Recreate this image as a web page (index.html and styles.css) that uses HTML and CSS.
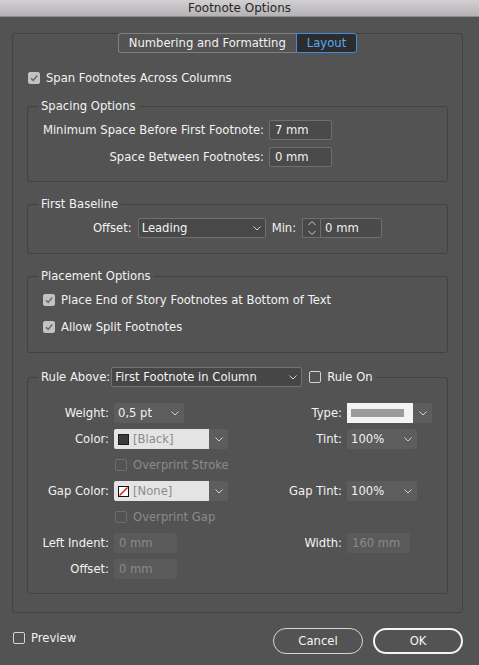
FILE: index.html
```html
<!DOCTYPE html>
<html lang="en">
<head>
<meta charset="utf-8">
<title>Footnote Options</title>
<link rel="stylesheet" href="styles.css">
</head>
<body>
<div class="titlebar">Footnote Options</div>

<div class="dialog">
  <div class="panel">
    <div class="tabs">
      <span class="tab">Numbering and Formatting</span>
      <span class="tab active">Layout</span>
    </div>

    <label class="check span-check">
      <span class="box on"><svg width="10" height="10" viewBox="0 0 10 10"><polyline points="2,5.2 4.2,7.4 8.2,2.6" fill="none" stroke="#6b6b6b" stroke-width="1.6"/></svg></span>
      <span>Span Footnotes Across Columns</span>
    </label>

    <fieldset class="group spacing">
      <legend>Spacing Options</legend>
      <div class="spacing-grid">
        <span class="lbl">Minimum Space Before First Footnote:</span>
        <span class="input">7 mm</span>
        <span class="lbl">Space Between Footnotes:</span>
        <span class="input">0 mm</span>
      </div>
    </fieldset>

    <fieldset class="group baseline">
      <legend>First Baseline</legend>
      <div class="baseline-row">
        <span>Offset:</span>
        <span class="select w128">
          <span>Leading</span>
          <svg class="chev" width="8" height="5" viewBox="0 0 8 5"><polyline points="0.5,0.5 4,4 7.5,0.5" fill="none" stroke="#d2d2d2"/></svg>
        </span>
        <span>Min:</span>
        <span class="spin">
          <span class="stepper">
            <svg width="8" height="16" viewBox="0 0 8 16"><polyline points="0.5,5 4,1.5 7.5,5" fill="none" stroke="#d2d2d2"/><polyline points="0.5,11 4,14.5 7.5,11" fill="none" stroke="#d2d2d2"/></svg>
          </span>
          <span class="input joined">0 mm</span>
        </span>
      </div>
    </fieldset>

    <fieldset class="group placement">
      <legend>Placement Options</legend>
      <div class="checks">
        <label class="check">
          <span class="box on"><svg width="10" height="10" viewBox="0 0 10 10"><polyline points="2,5.2 4.2,7.4 8.2,2.6" fill="none" stroke="#6b6b6b" stroke-width="1.6"/></svg></span>
          <span>Place End of Story Footnotes at Bottom of Text</span>
        </label>
        <label class="check">
          <span class="box on"><svg width="10" height="10" viewBox="0 0 10 10"><polyline points="2,5.2 4.2,7.4 8.2,2.6" fill="none" stroke="#6b6b6b" stroke-width="1.6"/></svg></span>
          <span>Allow Split Footnotes</span>
        </label>
      </div>
    </fieldset>

    <fieldset class="group rule">
      <legend>
        <span class="legend-row">
          <span>Rule Above:</span>
          <span class="select w191">
            <span>First Footnote in Column</span>
            <svg class="chev" width="8" height="5" viewBox="0 0 8 5"><polyline points="0.5,0.5 4,4 7.5,0.5" fill="none" stroke="#d2d2d2"/></svg>
          </span>
          <label class="check rule-on">
            <span class="box"></span>
            <span>Rule On</span>
          </label>
        </span>
      </legend>

      <div class="rule-grid">
        <span class="lbl">Weight:</span>
        <span class="drop">
          <span>0,5 pt</span>
          <svg width="8" height="5" viewBox="0 0 8 5"><polyline points="0.5,0.5 4,4 7.5,0.5" fill="none" stroke="#d2d2d2"/></svg>
        </span>
        <span class="lbl">Type:</span>
        <span class="combo">
          <span class="typebox"><span class="typebar"></span></span>
          <span class="arrow"><svg width="8" height="5" viewBox="0 0 8 5"><polyline points="0.5,0.5 4,4 7.5,0.5" fill="none" stroke="#d2d2d2"/></svg></span>
        </span>

        <span class="lbl">Color:</span>
        <span class="combo">
          <span class="swatchbox"><span class="swatch black"></span>[Black]</span>
          <span class="arrow"><svg width="8" height="5" viewBox="0 0 8 5"><polyline points="0.5,0.5 4,4 7.5,0.5" fill="none" stroke="#d2d2d2"/></svg></span>
        </span>
        <span class="lbl">Tint:</span>
        <span class="drop">
          <span>100%</span>
          <svg width="8" height="5" viewBox="0 0 8 5"><polyline points="0.5,0.5 4,4 7.5,0.5" fill="none" stroke="#d2d2d2"/></svg>
        </span>

        <label class="check dim wide">
          <span class="box"></span>
          <span>Overprint Stroke</span>
        </label>

        <span class="lbl">Gap Color:</span>
        <span class="combo">
          <span class="swatchbox">
            <svg class="swatch" width="11" height="11" viewBox="0 0 11 11"><rect x="0.5" y="0.5" width="10" height="10" fill="#fff" stroke="#111"/><line x1="1.5" y1="9.5" x2="9.5" y2="1.5" stroke="#e0201c" stroke-width="1.6"/></svg>
            [None]
          </span>
          <span class="arrow"><svg width="8" height="5" viewBox="0 0 8 5"><polyline points="0.5,0.5 4,4 7.5,0.5" fill="none" stroke="#d2d2d2"/></svg></span>
        </span>
        <span class="lbl">Gap Tint:</span>
        <span class="drop">
          <span>100%</span>
          <svg width="8" height="5" viewBox="0 0 8 5"><polyline points="0.5,0.5 4,4 7.5,0.5" fill="none" stroke="#d2d2d2"/></svg>
        </span>

        <label class="check dim wide">
          <span class="box"></span>
          <span>Overprint Gap</span>
        </label>

        <span class="lbl">Left Indent:</span>
        <span class="off">0 mm</span>
        <span class="lbl">Width:</span>
        <span class="off">160 mm</span>

        <span class="lbl">Offset:</span>
        <span class="off">0 mm</span>
      </div>
    </fieldset>
  </div>

  <div class="footer">
    <label class="check preview">
      <span class="box"></span>
      <span>Preview</span>
    </label>
    <span class="btn">Cancel</span>
    <span class="btn ok">OK</span>
  </div>
</div>
</body>
</html>
```

FILE: styles.css
```css
html, body {
  margin: 0;
}
body {
  width: 479px;
  height: 665px;
  overflow: hidden;
  background: #535353;
  color: #f2f2f2;
  font-family: "DejaVu Sans", sans-serif;
  font-size: 11.6px;
}

.titlebar {
  height: 16px;
  line-height: 16px;
  text-align: center;
  font-size: 12px;
  color: #262626;
  background: linear-gradient(#d2d0d2, #b4b2b4);
  border-bottom: 1px solid #8c8c8c;
}

.dialog {
  padding: 16px 16px 0 12px;
}
.panel {
  border: 1px solid #424242;
  border-radius: 3px;
  padding: 0 14px 18px;
}

/* tabs */
.tabs {
  display: flex;
  justify-content: center;
  margin-top: -1px;
  height: 20px;
}
.tab {
  box-sizing: border-box;
  height: 20px;
  line-height: 18px;
  padding: 0 10px;
  border: 1px solid #7e7e7e;
  border-right: none;
  border-radius: 3px 0 0 3px;
  color: #f2f2f2;
}
.tab.active {
  background: #2c2c2c;
  border: 1px solid #3f8ce2;
  border-radius: 0 3px 3px 0;
  color: #5aa9f5;
}

/* checkboxes */
.check {
  display: flex;
  align-items: center;
  gap: 6px;
  height: 14px;
  white-space: nowrap;
}
.box {
  box-sizing: border-box;
  flex: none;
  width: 12px;
  height: 12px;
  border: 1px solid #d4d4d4;
  border-radius: 2px;
  display: flex;
  align-items: center;
  justify-content: center;
}
.box.on {
  background: #c2c2c2;
  border-color: #c2c2c2;
}
.check.dim {
  color: #8b8b8b;
}
.check.dim .box {
  border-color: #6e6e6e;
}
.span-check {
  margin: 18px 0 0 1px;
}

/* group boxes */
.group {
  margin: 0;
  padding: 0;
  min-width: 0;
  border: 1px solid #424242;
  border-radius: 3px;
}
.group legend {
  margin-left: 10px;
  padding: 0 3px;
  line-height: 14px;
}
.spacing {
  margin-top: 14px;
}
.baseline, .placement {
  margin-top: 15px;
}
.rule {
  margin-top: 14px;
}

.lbl {
  text-align: right;
  white-space: nowrap;
}

.input {
  box-sizing: border-box;
  height: 20px;
  line-height: 18px;
  padding: 0 5px;
  border: 1px solid #6f6f6f;
  border-radius: 2px;
  background: #4a4a4a;
}

.select {
  box-sizing: border-box;
  display: flex;
  align-items: center;
  justify-content: space-between;
  height: 20px;
  padding: 0 4px 0 3px;
  border: 1px solid #6f6f6f;
  border-radius: 2px;
  background: #484848;
  white-space: nowrap;
}
.w128 { width: 128px; }
.w191 { width: 191px; }

.spacing-grid {
  display: grid;
  grid-template-columns: 236px 63px;
  column-gap: 5px;
  row-gap: 7px;
  align-items: center;
  padding: 7px 0 14px;
}

.baseline-row {
  display: flex;
  justify-content: center;
  align-items: center;
  gap: 6px;
  padding: 7px 0 15px;
}
.spin {
  display: flex;
}
.stepper {
  box-sizing: border-box;
  width: 18px;
  height: 20px;
  border: 1px solid #6f6f6f;
  border-right: none;
  border-radius: 2px 0 0 2px;
  background: #484848;
  display: flex;
  align-items: center;
  justify-content: center;
}
.input.joined {
  width: 62px;
  border-radius: 0 2px 2px 0;
  padding-left: 4px;
}

.checks {
  display: flex;
  flex-direction: column;
  gap: 13px;
  padding: 10px 0 18px 15px;
}

/* rule above */
.legend-row {
  display: flex;
  align-items: center;
  height: 20px;
}
.legend-row .select {
  margin-left: 1px;
  background: #464646;
  border-color: #737373;
}
.rule-on {
  margin-left: 7px;
}

.rule-grid {
  display: grid;
  grid-template-columns: 81px 120px 103px 85px;
  grid-auto-rows: 20px;
  column-gap: 5px;
  row-gap: 6px;
  align-items: center;
  padding: 16px 0 14px;
}
.rule-grid .wide {
  grid-column: 2 / 5;
  margin-left: 1px;
}

.drop {
  box-sizing: border-box;
  width: 70px;
  height: 20px;
  display: flex;
  align-items: center;
  justify-content: space-between;
  padding: 0 5px 0 4px;
  border-radius: 2px;
  background: #5d5d5d;
}

.combo {
  display: flex;
  height: 20px;
}
.typebox {
  width: 66px;
  background: #f3f3f3;
  display: flex;
  align-items: center;
  padding-left: 4px;
  box-sizing: border-box;
}
.typebar {
  width: 53px;
  height: 8px;
  background: #9b9b9b;
}
.swatchbox {
  box-sizing: border-box;
  width: 95px;
  display: flex;
  align-items: center;
  gap: 4px;
  padding-left: 4px;
  background: #e4e4e4;
  color: #8c8c8c;
  border-radius: 2px 0 0 2px;
}
.swatch.black {
  box-sizing: border-box;
  width: 11px;
  height: 11px;
  background: #3b3b3b;
  border: 1px solid #1e1e1e;
}
.arrow {
  width: 19px;
  display: flex;
  align-items: center;
  justify-content: center;
  background: #5d5d5d;
  border-radius: 0 2px 2px 0;
}

.off {
  box-sizing: border-box;
  width: 63px;
  height: 20px;
  line-height: 20px;
  padding-left: 5px;
  border-radius: 2px;
  background: #5a5a5a;
  color: #8a8a8a;
}

/* footer */
.footer {
  display: flex;
  align-items: center;
  margin-top: 15px;
  padding-left: 1px;
}
.preview {
  margin-right: auto;
  margin-bottom: 6px;
}
.btn {
  box-sizing: border-box;
  width: 90px;
  height: 26px;
  display: flex;
  align-items: center;
  justify-content: center;
  border: 1px solid #d6d6d6;
  border-radius: 13px;
  color: #f6f6f6;
}
.btn.ok {
  margin-left: 10px;
  border: 2px solid #f4f4f4;
}
```
